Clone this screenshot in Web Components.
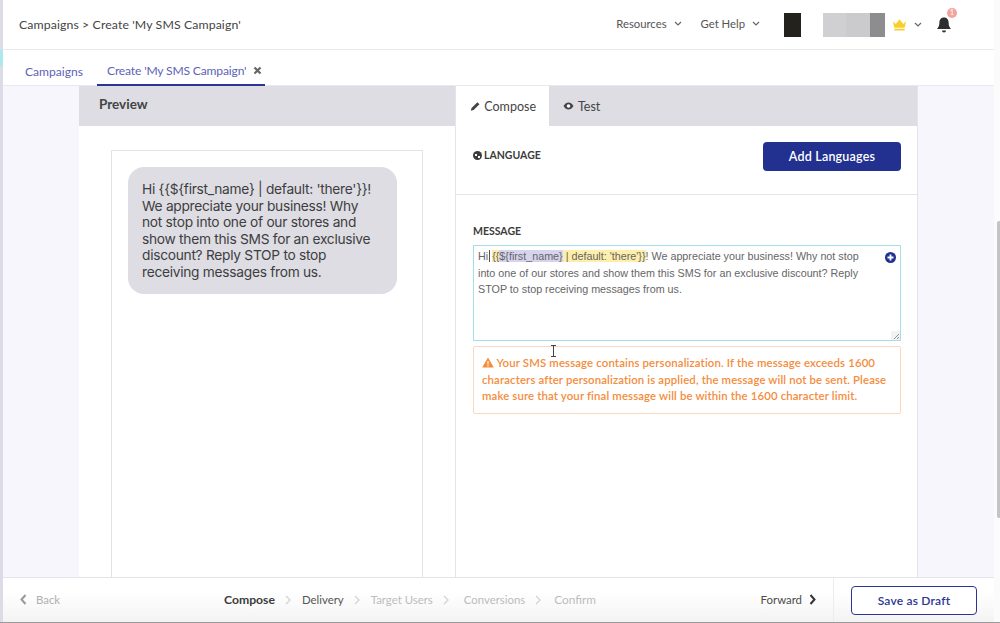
<!DOCTYPE html>
<html lang="en">
<head>
<meta charset="utf-8">
<title>Create SMS Campaign</title>
<style>
html, body { margin: 0; height: 100%; overflow: hidden; }
body { font-family: Lato, "Liberation Sans", sans-serif; background: #f6f6fc; color: #3c3c3c; }
</style>
</head>
<body>
<app-shell>
  <top-bar slot="top"></top-bar>
  <tab-strip slot="top"></tab-strip>
  <preview-panel slot="left">Hi {{${first_name} | default: 'there'}}! We appreciate your business! Why not stop into one of our stores and show them this SMS for an exclusive discount? Reply STOP to stop receiving messages from us.</preview-panel>
  <compose-panel slot="right"></compose-panel>
  <wizard-footer slot="bottom"></wizard-footer>
</app-shell>

<script>
const SANS = 'Lato, "Liberation Sans", sans-serif';

//page frame: left strip, main column, scrollbar gutter
class AppShell extends HTMLElement {
  constructor() {
    super();
    this.attachShadow({ mode: "open" }).innerHTML = `
<style>
:host { display: flex; width: 1000px; height: 623px; overflow: hidden; }
.strip { width: 3px; flex: none; background: #dcdce6; display: flex; flex-direction: column; }
.strip i { display: block; height: 16px; margin-top: 50px; background: #a8eaf0; }
.main { width: 991px; flex: none; display: flex; flex-direction: column; background: #f6f6fc; }
.content { flex: 1; min-height: 0; display: flex; padding-left: 76px; }
.gutter { width: 6px; flex: none; background: #fbfbfb; padding: 221px 0 0 3px; box-sizing: border-box; }
.gutter i { display: block; height: 297px; background: #c4c4c4; border-radius: 2px 0 0 2px; }
</style>
<div class="strip"><i></i></div>
<div class="main">
  <slot name="top"></slot>
  <div class="content"><slot name="left"></slot><slot name="right"></slot></div>
  <slot name="bottom"></slot>
</div>
<div class="gutter"><i></i></div>`;
  }
}

class TopBar extends HTMLElement {
  constructor() {
    super();
    const chev = `<svg width="8" height="6" viewBox="0 0 8 6"><path d="M1 1l3 3 3-3" fill="none" stroke="#666" stroke-width="1.200"/></svg>`;
    this.attachShadow({ mode: "open" }).innerHTML = `
<style>
:host { display: flex; align-items: center; height: 49px; background: #fff; border-bottom: 1px solid #e9e9f0; font: 11.300px ${SANS}; color: #444; padding-left: 16px; flex: none; }
.crumb { flex: 1; font-size: 12.300px; letter-spacing: .1px; }
.menu { display: flex; align-items: center; gap: 7px; color: #555; padding-bottom: 2px; }
.menu.one { margin-right: 19px; }
.logo { width: 17px; height: 24px; background: #24221c; margin: 0 22px 0 24px; }
.blur { display: flex; height: 24px; margin-right: 7px; }
.blur i { display: block; height: 24px; }
.user { display: flex; align-items: center; gap: 7px; }
.bell { position: relative; margin: 0 42px 0 14px; width: 16px; height: 18px; }
.badge { position: absolute; left: 11px; top: -8px; width: 10px; height: 10px; border-radius: 50%; background: #f4a29c; color: #fff; font-size: 7.500px; line-height: 10px; text-align: center; }
</style>
<div class="crumb">Campaigns &gt; Create 'My SMS Campaign'</div>
<div class="menu one">Resources ${chev}</div>
<div class="menu">Get Help ${chev}</div>
<div class="logo"></div>
<div class="blur"><i style="width:23px;background:#d0d0d2"></i><i style="width:24px;background:#cbcbcd"></i><i style="width:15px;background:#8d8d8f"></i></div>
<div class="user">
  <svg width="15" height="13" viewBox="0 0 16 13"><path d="M1 3l3 3 4-5 4 5 3-3-1.500 7h-11z M2.500 11h11v2h-11z" fill="#f6cf2e"/></svg>
  ${chev}
</div>
<div class="bell">
  <svg width="16" height="18" viewBox="0 0 16 18"><path d="M8 1.500c-3 0-4.600 2.300-4.600 5 0 3.500-1.100 5-2.400 6.500h14c-1.300-1.500-2.400-3-2.400-6.500 0-2.700-1.600-5-4.600-5zM6 14.500a2 2 0 0 0 4 0z" fill="#2e2e2e"/></svg>
  <span class="badge">1</span>
</div>`;
  }
}

class TabStrip extends HTMLElement {
  constructor() {
    super();
    this.attachShadow({ mode: "open" }).innerHTML = `
<style>
:host { display: flex; height: 36px; background: #fff; border-bottom: 1px solid #e9e9f0; box-sizing: border-box; padding-left: 22px; font: 12.100px ${SANS}; color: #5c62b8; flex: none; }
div { display: flex; align-items: center; padding-top: 7px; }
.on { margin-left: 14px; padding: 7px 3px 0 10px; border-bottom: 2px solid #2b3595; margin-bottom: -1px; gap: 7px; letter-spacing: -.17px; }
</style>
<div>Campaigns</div>
<div class="on">Create 'My SMS Campaign'
  <svg width="9" height="9" viewBox="0 0 9 9"><path d="M1.500 1.500l6 6M7.500 1.500l-6 6" stroke="#666" stroke-width="2.200" fill="none"/></svg>
</div>`;
  }
}

class PreviewPanel extends HTMLElement {
  constructor() {
    super();
    this.attachShadow({ mode: "open" }).innerHTML = `
<style>
:host { display: flex; flex-direction: column; width: 376px; height: 100%; background: #fff; flex: none; box-sizing: border-box; }
.head { height: 40px; box-sizing: border-box; padding: 0 0 4px 20px; flex: none; background: #dddde3; display: flex; align-items: center; font: 700 13.500px ${SANS}; color: #444; }
.body { flex: 1; min-height: 0; padding: 24px 32px 0 32px; }
.phone { height: 100%; box-sizing: border-box; border: 1px solid #e2e2ea; border-bottom: 0; padding: 16px 25px 0 16px; }
.bubble { background: #dddde3; border-radius: 16px; padding: 14px 21px 13px 14px; font: 13.750px/16.600px Inter, "Liberation Sans", sans-serif; letter-spacing: -.28px; color: #3e3e40; }
</style>
<div class="head">Preview</div>
<div class="body"><div class="phone"><div class="bubble"><slot></slot></div></div></div>`;
  }
}

class ComposePanel extends HTMLElement {
  constructor() {
    super();
    this.attachShadow({ mode: "open" }).innerHTML = `
<style>
:host { display: flex; flex-direction: column; width: 463px; height: 100%; background: #fff; border-left: 1px solid #e4e4ea; border-right: 1px solid #e4e4ea; box-sizing: border-box; flex: none; position: relative; font-family: ${SANS}; }
.tabs { height: 40px; flex: none; background: #dddde3; display: flex; font-size: 12.500px; color: #444; }
.tab { display: flex; align-items: center; gap: 4px; padding: 0 13px 0 14px; }
.tab.on { background: #fff; width: 93px; box-sizing: border-box; gap: 4px; }
.lang { height: 69px; flex: none; box-sizing: border-box; border-bottom: 1px solid #e4e4ea; display: flex; justify-content: space-between; padding: 16px 16px 0 17px; }
.label { display: flex; align-items: center; gap: 2px; height: 26px; font: 700 10.500px ${SANS}; color: #3c3c3c; }
.add { width: 138px; height: 29px; background: #22318f; color: #fff; border-radius: 4px; display: flex; align-items: center; justify-content: center; font: 600 12.500px ${SANS}; letter-spacing: .2px; }
.form { padding: 30px 16px 0 17px; }
.msg { font: 700 10.500px ${SANS}; color: #3c3c3c; height: 20px; }
.area { position: relative; height: 96px; box-sizing: border-box; border: 1px solid #a5dfe9; padding: 2px 4px; font: 10.750px/16.500px "Liberation Sans", sans-serif; color: #666; }
.area div { white-space: nowrap; }
.y { background: #fdeeaa; } .p { background: #d6d3ee; }
.caret { border-left: 1px solid #555; margin-left: 1px; padding-left: 2px; }
.plus { position: absolute; right: 4px; top: 6px; }
.grip { position: absolute; right: 0; bottom: 0; width: 9px; height: 9px; background: #f2f2f2; }
.warn { margin-top: 5px; height: 68px; box-sizing: border-box; border: 1px solid #fbd7bd; border-radius: 2px; padding: 8px 8px 0; font: 600 11.400px/16.600px ${SANS}; color: #f58c3c; letter-spacing: .13px; white-space: nowrap; }
.warn svg { vertical-align: -1px; }
.cursor { position: absolute; left: 94px; top: 259px; }
</style>
<div class="tabs">
  <div class="tab on"><svg width="11" height="11" viewBox="0 0 10 10"><path d="M7.200.8l2 2-5.700 5.700L.8 9.200l.7-2.700z" fill="#444"/></svg>Compose</div>
  <div class="tab"><svg width="11" height="8" viewBox="0 0 11 8"><path d="M.5 4C2 1.500 3.700.5 5.500.5S9 1.500 10.500 4C9 6.500 7.300 7.500 5.500 7.500S2 6.500.5 4z" fill="#444"/><circle cx="5.500" cy="4" r="1.800" fill="#fff"/></svg>Test</div>
</div>
<div class="lang">
  <div class="label"><svg width="9" height="9" viewBox="0 0 9 9"><circle cx="4.500" cy="4.500" r="4.500" fill="#3c3c3c"/><path d="M2 3h2v2H2zM5 5h2v2H5z" fill="#fff"/></svg>LANGUAGE</div>
  <div class="add">Add Languages</div>
</div>
<div class="form">
  <div class="msg">MESSAGE</div>
  <div class="area">
    <div>Hi<span class="caret"></span><span class="y">{{</span><span class="p">\${first_name}</span><span class="y"> | default: 'there'}}</span>! We appreciate your business! Why not stop</div>
    <div>into one of our stores and show them this SMS for an exclusive discount? Reply</div>
    <div>STOP to stop receiving messages from us.</div>
    <svg class="plus" width="11" height="11" viewBox="0 0 11 11"><circle cx="5.500" cy="5.500" r="5.500" fill="#22318f"/><path d="M5.500 2.500v6M2.500 5.500h6" stroke="#fff" stroke-width="1.800"/></svg>
    <svg class="grip" viewBox="0 0 9 9"><path d="M8 3L3 8M8 6L6 8" stroke="#777" stroke-width=".8"/></svg>
  </div>
  <div class="warn"><svg width="12" height="11" viewBox="0 0 12 11"><path d="M6 .5L11.800 10.500H.2z" fill="#f58c3c"/><path d="M6 4v3.500M6 8.300v1.200" stroke="#fff" stroke-width="1.200"/></svg> Your SMS message contains personalization. If the message exceeds 1600<br>characters after personalization is applied, the message will not be sent. Please<br>make sure that your final message will be within the 1600 character limit.</div>
</div>
<svg class="cursor" width="7" height="12" viewBox="0 0 7 12"><path d="M1 .5h5M1 11.500h5M3.500 .5v11" stroke="#444" stroke-width="1" fill="none"/></svg>`;
  }
}

class WizardFooter extends HTMLElement {
  constructor() {
    super();
    const sep = `<svg width="7" height="10" viewBox="0 0 7 10"><path d="M1 1l4 4-4 4" fill="none" stroke="#d4d4d4" stroke-width="1.300"/></svg>`;
    this.attachShadow({ mode: "open" }).innerHTML = `
<style>
:host { display: flex; align-items: center; height: 46px; box-sizing: border-box; border-top: 1px solid #e4e4ea; background: linear-gradient(#fff 30%, #f3f3f3); font: 11.400px ${SANS}; flex: none; position: relative; }
:host::after { content: ""; position: absolute; left: -3px; right: -6px; bottom: 0; height: 1px; background: #9a9a9a; }
.back { display: flex; align-items: center; gap: 9px; width: 221px; padding: 0 0 2px 17px; box-sizing: border-box; color: #b0b0b0; flex: none; }
.steps { display: flex; align-items: center; gap: 10px; color: #bcbcbc; padding-bottom: 2px; }
.steps b { color: #3c3c3c; font-size: 12.200px; margin-bottom: 1px; }
.steps .d { color: #555; }
.steps .conv { margin-left: 4px; }
.steps .last { margin-left: 2px; font-size: 11.800px; }
.fwd { margin-left: auto; display: flex; align-items: center; gap: 7px; color: #4a4a4a; padding: 0 17px 2px 0; }
.save { width: 161px; height: 45px; box-sizing: border-box; border-left: 1px solid #ececf0; display: flex; align-items: center; padding-left: 17px; flex: none; }
.save span { width: 126px; height: 29px; box-sizing: border-box; border: 1.500px solid #2b3595; border-radius: 4px; display: flex; align-items: center; justify-content: center; color: #2b3595; font-size: 12px; font-weight: 600; letter-spacing: .2px; background: #fff; }
</style>
<div class="back"><svg width="7" height="11" viewBox="0 0 7 11"><path d="M5.500 1L1.500 5.500l4 4.500" fill="none" stroke="#999" stroke-width="2"/></svg>Back</div>
<div class="steps"><b>Compose</b>${sep}<span class="d">Delivery</span>${sep}<span>Target Users</span>${sep}<span class="conv">Conversions</span>${sep}<span class="last">Confirm</span></div>
<div class="fwd">Forward <svg width="7" height="11" viewBox="0 0 7 11"><path d="M1.500 1l4 4.500-4 4.500" fill="none" stroke="#333" stroke-width="2"/></svg></div>
<div class="save"><span>Save as Draft</span></div>`;
  }
}

customElements.define("app-shell", AppShell);
customElements.define("top-bar", TopBar);
customElements.define("tab-strip", TabStrip);
customElements.define("preview-panel", PreviewPanel);
customElements.define("compose-panel", ComposePanel);
customElements.define("wizard-footer", WizardFooter);
</script>
</body>
</html>
